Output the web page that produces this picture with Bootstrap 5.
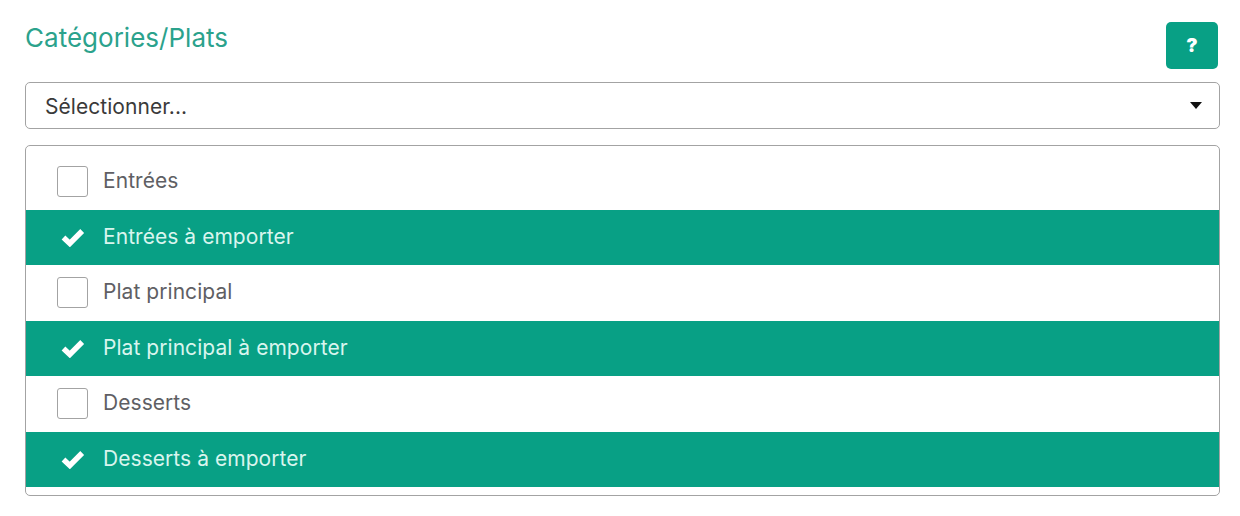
<!DOCTYPE html>
<html lang="fr">
<head>
<meta charset="utf-8">
<title>Catégories/Plats</title>
<link href="https://cdn.jsdelivr.net/npm/bootstrap@5.3.0/dist/css/bootstrap.min.css" rel="stylesheet">
<style>
html,body{height:100%;}
body{background:#fff;font-family:Inter,"Liberation Sans",sans-serif;overflow:hidden;}
.page-wrap{padding:22px 20px 0 25px;}
.head-row{height:60px;}
.head-title{color:#2ba28c;font-size:26px;font-weight:400;line-height:32px;letter-spacing:.02px;margin:0;}
.help-btn{width:52px;height:47px;margin-right:2px;background:#08a085;border:0;border-radius:5px;color:#fff;font-weight:900;font-size:19px;line-height:47px;padding:0;}
.help-btn:hover{background:#08a085;color:#fff;}
.sel-box{height:47px;border:1px solid #a3a3a3;border-radius:5px;padding:2px 17px 0 19px;font-size:21px;letter-spacing:.05px;color:#3a3a3a;margin-bottom:16px;}
.caret-mark{width:0;height:0;border-left:6px solid transparent;border-right:6px solid transparent;border-top:7px solid #111;margin-top:-2px;}
.cat-list{height:351px;border:1px solid #a3a3a3;border-radius:5px;padding-top:8px;overflow:hidden;}
.cat-row{height:55.5px;padding-left:31px;font-size:21px;letter-spacing:.05px;color:#5f5f64;}
.cat-row.is-on{background:#08a085;color:#d9f5ee;}
.row-label{position:relative;top:-1px;}
.tick-cell{width:31px;margin-right:15px;}
.tick-empty{width:31px;height:31px;border:1px solid #a3a3a3;border-radius:3px;background:#fff;}
.tick-svg{width:24px;height:20px;display:block;margin-left:4px;}
</style>
</head>
<body>
<div class="page-wrap">
  <div class="head-row d-flex justify-content-between align-items-start">
    <h5 class="head-title">Catégories/Plats</h5>
    <button type="button" class="btn help-btn">?</button>
  </div>
  <div class="sel-box d-flex align-items-center justify-content-between">
    <span>Sélectionner...</span>
    <span class="caret-mark"></span>
  </div>
  <div class="cat-list">
    <div class="cat-row d-flex align-items-center"><span class="tick-cell"><span class="tick-empty d-block"></span></span><span class="row-label">Entrées</span></div>
    <div class="cat-row is-on d-flex align-items-center"><span class="tick-cell"><svg class="tick-svg" viewBox="0 0 24 20"><path d="M2.5 10.5 8.8 16.5 21.2 4" fill="none" stroke="#fff" stroke-width="5.4"/></svg></span><span class="row-label">Entrées à emporter</span></div>
    <div class="cat-row d-flex align-items-center"><span class="tick-cell"><span class="tick-empty d-block"></span></span><span class="row-label">Plat principal</span></div>
    <div class="cat-row is-on d-flex align-items-center"><span class="tick-cell"><svg class="tick-svg" viewBox="0 0 24 20"><path d="M2.5 10.5 8.8 16.5 21.2 4" fill="none" stroke="#fff" stroke-width="5.4"/></svg></span><span class="row-label">Plat principal à emporter</span></div>
    <div class="cat-row d-flex align-items-center"><span class="tick-cell"><span class="tick-empty d-block"></span></span><span class="row-label">Desserts</span></div>
    <div class="cat-row is-on d-flex align-items-center"><span class="tick-cell"><svg class="tick-svg" viewBox="0 0 24 20"><path d="M2.5 10.5 8.8 16.5 21.2 4" fill="none" stroke="#fff" stroke-width="5.4"/></svg></span><span class="row-label">Desserts à emporter</span></div>
  </div>
</div>
</body>
</html>
